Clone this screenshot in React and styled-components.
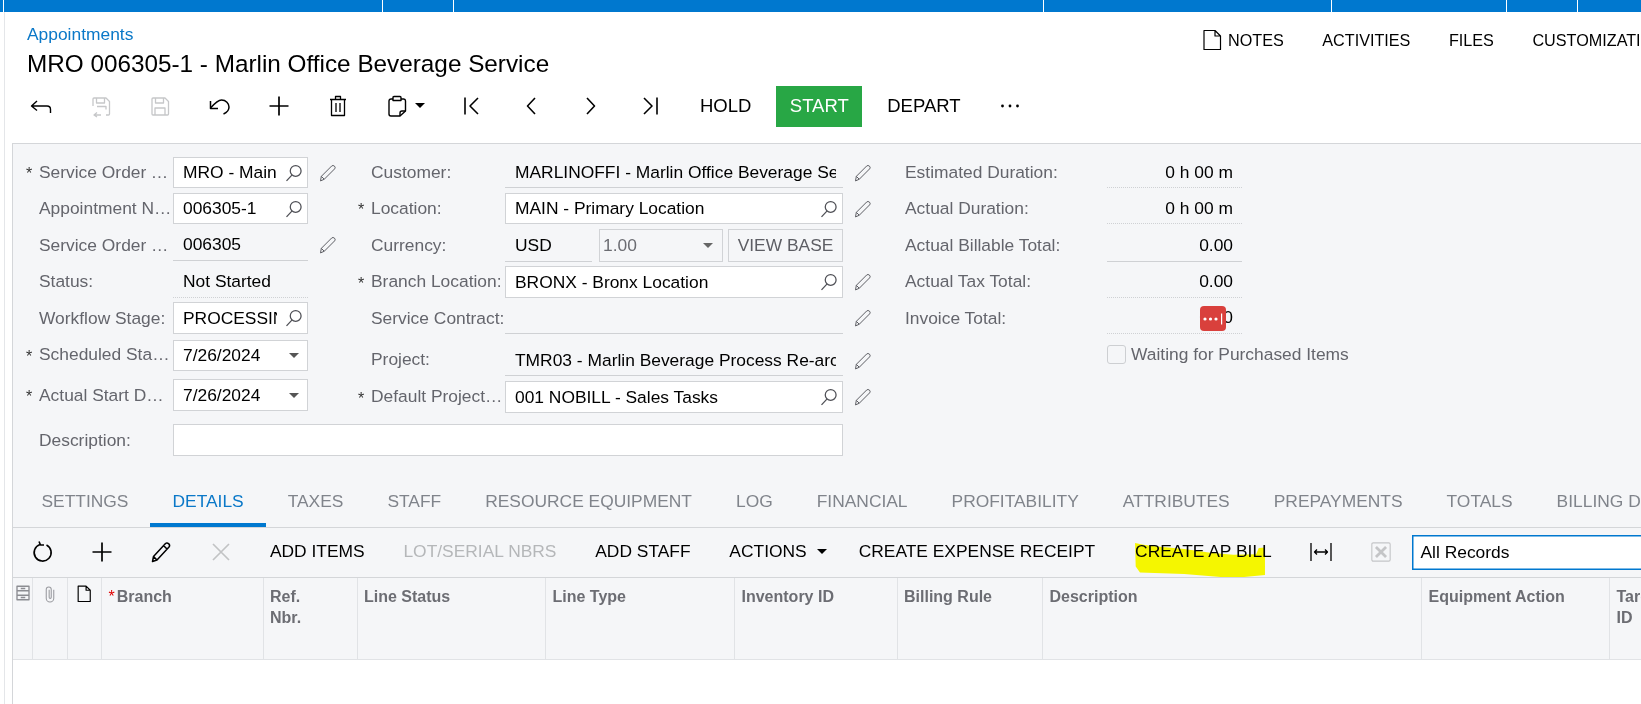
import React from "react";
import styled, { createGlobalStyle } from "styled-components";

const GlobalStyle = createGlobalStyle`
  html, body {
    margin: 0;
    padding: 0;
    width: 1641px;
    height: 704px;
    overflow: hidden;
    background: #fff;
    font-family: "Liberation Sans", Arial, sans-serif;
    font-size: 17.4px;
    color: #000;
  }
  * { box-sizing: border-box; }
`;

const Page = styled.div`
  width: 1641px;
  height: 704px;
  overflow: hidden;
  display: flex;
  flex-direction: column;
`;

const TopBar = styled.div`
  display: flex;
  height: 12px;
  flex: none;
  background: #0078cf;
`;

const TopSeg = styled.div`
  width: ${(p) => p.$w}px;
  height: 100%;
  border-right: 1px solid #fff;
  flex: none;
`;

const Main = styled.div`
  flex: 1;
  min-height: 0;
  margin-left: 4px;
  border-left: 1px solid #e4e6e9;
  display: flex;
  flex-direction: column;
`;

const Header = styled.div`
  display: flex;
  justify-content: space-between;
  height: 74px;
  flex: none;
  padding-left: 22px;
`;

const Crumb = styled.div`
  color: #0a78c8;
  font-size: 17.4px;
  line-height: 20px;
  margin-top: 12px;
`;

const Title = styled.h1`
  margin: 5px 0 0;
  font-size: 24.3px;
  font-weight: 400;
  line-height: 30px;
  white-space: nowrap;
`;

const TopLinks = styled.div`
  display: flex;
  flex: none;
  width: 441px;
  height: 38px;
  margin-top: 9px;
  align-items: center;
  overflow: hidden;
`;

const TopLink = styled.span`
  flex: none;
  font-size: 16.2px;
  margin-right: 38.5px;
  white-space: nowrap;
`;

const NoteIcon = styled.span`
  display: flex;
  flex: none;
  margin-right: 4px;
`;

const Toolbar = styled.div`
  display: flex;
  align-items: center;
  height: 41px;
  flex: none;
  padding-left: 6.5px;
`;

const IconBtn = styled.span`
  display: flex;
  flex: none;
  align-items: center;
  justify-content: center;
  width: ${(p) => p.$w || 59.4}px;
  height: 100%;
  padding-bottom: 2px;
  gap: ${(p) => p.$gap || 0}px;
`;

const TextBtn = styled.span`
  position: relative;
  display: flex;
  flex: none;
  align-items: center;
  height: 100%;
  padding: 0 ${(p) => p.$pr || p.$px || 20}px 2px ${(p) => p.$px || 20}px;
  font-size: ${(p) => p.$fs || 17.4}px;
  white-space: nowrap;
`;

const DisabledText = styled.span`
  color: #b5b7b9;
`;

const StartBtn = styled.span`
  display: flex;
  flex: none;
  align-items: center;
  height: 100%;
  margin: 0 5px;
  padding: 0 13.5px 2px;
  background: #28a745;
  color: #fff;
  font-size: 18.5px;
`;

const Caret = styled.i`
  display: block;
  flex: none;
  width: 0;
  height: 0;
  margin-left: ${(p) => p.$ml || 0}px;
  border-left: 5px solid transparent;
  border-right: 5px solid transparent;
  border-top: 5px solid ${(p) => p.$color || "#000"};
`;

const Panel = styled.div`
  flex: 1;
  min-height: 0;
  margin: 16px 0 0 7px;
  border-top: 1px solid #d4d6d9;
  border-left: 1px solid #d4d6d9;
  background: #f5f6f8;
  display: flex;
  flex-direction: column;
`;

const Form = styled.div`
  display: flex;
  flex: none;
  padding: 13px 0 0 13px;
`;

const LeftBlock = styled.div`
  display: flex;
  flex-direction: column;
  width: 857px;
  flex: none;
`;

const Columns = styled.div`
  display: flex;
`;

const Column = styled.div`
  display: flex;
  flex-direction: column;
  flex: none;
  width: ${(p) => p.$w}px;
  margin-left: ${(p) => p.$ml || 0}px;
`;

const Row = styled.div`
  display: flex;
  align-items: center;
  height: ${(p) => p.$h || 31}px;
  margin-top: ${(p) => (p.$mt === undefined ? 5 : p.$mt)}px;
`;

const Star = styled.span`
  flex: none;
  width: 13px;
  height: 13px;
  font-size: 16px;
  color: #333;
  line-height: 1;
`;

const Label = styled.span`
  flex: none;
  width: ${(p) => p.$w || 134}px;
  margin-bottom: ${(p) => (p.$up ? 2 : 0)}px;
  padding-right: 1px;
  color: #64656c;
  white-space: nowrap;
  overflow: ${(p) => (p.$open ? "visible" : "hidden")};
  text-overflow: ${(p) => (p.$open ? "clip" : "ellipsis")};
`;

const Field = styled.div`
  position: relative;
  display: flex;
  align-items: center;
  flex: none;
  width: ${(p) => p.$w}px;
  height: 100%;
  padding: 0 ${(p) => p.$pr ?? 7}px 0 ${(p) => (p.$box ? 9 : 10)}px;
  background: ${(p) => (p.$box ? "#fff" : "transparent")};
  border: ${(p) => (p.$box ? "1px solid #d1d3d6" : "none")};
  border-bottom: ${(p) =>
    p.$box ? "1px solid #d1d3d6" : p.$line ? "1px solid #cfd1d4" : p.$dot ? "1px dotted #cfd1d4" : "none"};
`;

const Value = styled.span`
  flex: 1;
  min-width: 0;
  overflow: hidden;
  white-space: nowrap;
  text-align: ${(p) => (p.$right ? "right" : "left")};
`;

const FieldIcon = styled.span`
  display: flex;
  flex: none;
  align-items: center;
  justify-content: center;
  width: 20px;
  margin-left: 7px;
`;

const Side = styled.span`
  display: flex;
  flex: none;
  width: 40px;
  justify-content: center;
`;

const Group = styled.div`
  display: flex;
  flex: none;
  width: 338px;
  height: 100%;
  gap: 5px;
`;

const RateSelect = styled.div`
  display: flex;
  align-items: center;
  justify-content: space-between;
  flex: none;
  width: 124px;
  height: 100%;
  margin-left: 2px;
  padding: 0 9px 0 3px;
  border: 1px solid #d1d3d6;
  color: #6b6c72;
`;

const ViewBase = styled.div`
  display: flex;
  align-items: center;
  justify-content: center;
  flex: 1;
  height: 100%;
  border: 1px solid #d1d3d6;
  color: #5d5e64;
`;

const RedBadge = styled.span`
  position: absolute;
  right: 16px;
  top: 4px;
  display: flex;
  align-items: center;
  justify-content: center;
  width: 26px;
  height: 25px;
  border-radius: 4px;
  background: #d9403c;
`;

const CheckRow = styled.div`
  display: flex;
  align-items: center;
  height: 19px;
  margin: 11px 0 0 202px;
  color: #64656c;
  white-space: nowrap;
`;

const CheckBox = styled.span`
  flex: none;
  width: 19px;
  height: 19px;
  margin-right: 5px;
  border: 1px solid #cdcfd2;
  border-radius: 3px;
  background: #f5f6f8;
`;

const TabBar = styled.div`
  display: flex;
  flex: none;
  height: 52px;
  margin-top: 20px;
  padding-left: 6.5px;
  border-bottom: 1px solid #d4d6d9;
  overflow: hidden;
`;

const Tab = styled.div`
  flex: none;
  height: 51px;
  padding: 0 22px;
  line-height: 50px;
  white-space: nowrap;
  color: ${(p) => (p.$active ? "#0a78c8" : "#80848b")};
  border-bottom: 4px solid ${(p) => (p.$active ? "#0078cf" : "transparent")};
`;

const GridBar = styled.div`
  display: flex;
  flex: none;
  align-items: center;
  height: 49px;
  overflow: hidden;
`;

const Highlight = styled.svg`
  position: absolute;
  left: 19px;
  top: 15px;
  mix-blend-mode: multiply;
`;

const Search = styled.div`
  flex: none;
  display: flex;
  align-items: center;
  width: 260px;
  height: 35px;
  margin-left: 1px;
  padding-left: 8px;
  background: #fff;
  border: 1px solid #0078cf;
  box-shadow: inset 0 0 0 0.5px #0078cf;
`;

const GridHead = styled.div`
  display: flex;
  flex: none;
  height: 83px;
  border-top: 1px solid #d4d6d9;
  border-bottom: 1px solid #e1e3e6;
`;

const HeadCell = styled.div`
  flex: none;
  width: ${(p) => p.$w}px;
  padding: 8px 6px 0 6.5px;
  border-right: 1px solid #e1e3e6;
  font-size: 16px;
  font-weight: 700;
  line-height: 21px;
  color: #6c6d73;
  white-space: nowrap;
  &:last-child { border-right: none; }
`;

const IconCell = styled.div`
  display: flex;
  flex: none;
  justify-content: center;
  width: ${(p) => p.$w}px;
  padding-top: 6px;
  border-right: 1px solid #e1e3e6;
`;

const ReqMark = styled.span`
  color: #e00000;
  font-weight: 400;
  margin-right: 2px;
`;

const GridBody = styled.div`
  flex: 1;
  background: #fff;
`;

const Svg = ({ size = 24, color = "#000", sw = 1.6, children }) => (
  <svg
    width={size}
    height={size}
    viewBox="0 0 24 24"
    fill="none"
    stroke={color}
    strokeWidth={sw}
    strokeLinejoin="round"
  >
    {children}
  </svg>
);

const BackIcon = () => (
  <Svg sw={1.4}>
    <path d="M8 7L2.5 12L8 16.5M2.5 12H18Q21.5 12 21.5 15.5V19" />
  </Svg>
);
const SaveBackIcon = () => (
  <Svg color="#c6c7c9" sw={1.3}>
    <path d="M4 12V5a1 1 0 0 1 1-1h12l3.5 3.5V20a1 1 0 0 1-1 1H17M7.5 4v5h8V4M8 12.5h9v3" />
    <path d="M12 21H5M8 18.5L5 21L8 23" />
  </Svg>
);
const SaveIcon = () => (
  <Svg color="#c6c7c9" sw={1.3}>
    <path d="M4 5a1 1 0 0 1 1-1h12l3.5 3.5V20a1 1 0 0 1-1 1H5a1 1 0 0 1-1-1zM7.5 4v5h8V4M7 21v-7h10v7" />
  </Svg>
);
const UndoIcon = () => (
  <Svg sw={1.5}>
    <path d="M3.5 14C8 9 11 6 14.5 6C19 6 22 9.5 22 13C22 16 20 18.5 16.5 20" />
    <path d="M3.5 7V14.5H11" />
  </Svg>
);
const PlusIcon = () => (
  <Svg sw={1.7}>
    <path d="M12 2.5V21.5M2.5 12H21.5" />
  </Svg>
);
const TrashIcon = () => (
  <Svg sw={1.3}>
    <path d="M4 5.5H20M9.5 5.5V2.5H14.5V5.5M5.5 5.5V21.5H18.5V5.5M10 9V18M14 9V18" />
  </Svg>
);
const ClipIcon = () => (
  <Svg sw={1.4}>
    <path d="M8 5H6.5A2 2 0 0 0 4 7V20A2 2 0 0 0 6 22H15L20.5 17V7A2 2 0 0 0 18 5H16" />
    <path d="M8 6.5V3.5Q8 2.5 9 2.5H15Q16 2.5 16 3.5V6.5ZM15 22V19Q15 17 17 17H20.5" />
  </Svg>
);
const FirstIcon = () => (
  <Svg sw={1.6}>
    <path d="M5 3.5V20.5M18 4L10 12L18 20" />
  </Svg>
);
const PrevIcon = () => (
  <Svg sw={1.6}>
    <path d="M16 4L8.5 12L16 20" />
  </Svg>
);
const NextIcon = () => (
  <Svg sw={1.6}>
    <path d="M8 4L15.5 12L8 20" />
  </Svg>
);
const LastIcon = () => (
  <Svg sw={1.6}>
    <path d="M6 4L14 12L6 20M19 3.5V20.5" />
  </Svg>
);
const DotsIcon = () => (
  <Svg>
    <g fill="#000" stroke="none">
      <circle cx="4.5" cy="12" r="1.4" />
      <circle cx="12" cy="12" r="1.4" />
      <circle cx="19.5" cy="12" r="1.4" />
    </g>
  </Svg>
);
const DocIcon = () => (
  <Svg sw={1.2}>
    <path d="M4 2.5H15L20.5 8V21.5H4ZM15 2.5V8H20.5" />
  </Svg>
);
const SearchIcon = () => (
  <Svg size={20} color="#4e4f55" sw={1.5}>
    <circle cx="14" cy="9.5" r="6.5" />
    <path d="M9.5 14.5L3 21.5" />
  </Svg>
);
const PencilIcon = ({ color = "#5d5e64" }) => (
  <Svg size={20} color={color} sw={1.2}>
    <path d="M3 21.5L4 16L16.5 3.5Q18 2.3 19.8 3.8Q21.3 5.5 20 7L7.5 19.5ZM4 16L7.5 19.5" />
  </Svg>
);
const RefreshIcon = () => (
  <Svg sw={1.6}>
    <path d="M9 4.5A8.5 8.5 0 1 0 15.5 5" />
    <path d="M8 1.5L9.5 5L13 5" />
  </Svg>
);
const EditIcon = () => (
  <Svg sw={1.5}>
    <path d="M3.5 21.5L4.5 16.5L16.5 3.5Q18 2.3 19.8 3.8Q21.3 5.5 20 7L8 20ZM4.5 16.5L8 20M14.5 5.5L18 9" />
  </Svg>
);
const CloseIcon = () => (
  <Svg color="#c2c3c5" sw={1.7}>
    <path d="M4 4L20 20M20 4L4 20" />
  </Svg>
);
const FitIcon = () => (
  <Svg size={24} sw={1.3}>
    <path d="M2 3V21M22 3V21M5.5 12H18.5M8 9.5L5.5 12L8 14.5M16 9.5L18.5 12L16 14.5" />
  </Svg>
);
const ExcelIcon = () => (
  <Svg size={22} color="#c4c5c7" sw={1.2}>
    <rect x="2" y="2" width="20" height="20" rx="1.5" />
    <path d="M6.5 6.5L17.5 17.5M17.5 6.5L6.5 17.5" strokeWidth="3" />
  </Svg>
);
const ColumnsIcon = () => (
  <Svg size={18} color="#8c8d92" sw={1.8}>
    <path d="M4 3H20V21H4ZM4 9H20M4 15H20M9 6H15M9 18H15" />
  </Svg>
);
const PaperclipIcon = () => (
  <Svg size={20} color="#9b9ca1" sw={1.3}>
    <path d="M16.5 7V17A4.5 4.5 0 0 1 7.5 17V6.5A3 3 0 0 1 13.5 6.5V16A1 1 0 0 1 11 16V7" />
  </Svg>
);
const HeadDocIcon = () => (
  <Svg size={20} sw={1.4}>
    <path d="M5 2.5H14.5L19.5 7.5V21H5ZM14.5 2.5V7.5H19.5" />
  </Svg>
);
const BadgeDots = () => (
  <svg width="24" height="14" viewBox="0 0 24 14">
    <g fill="#fff">
      <circle cx="4" cy="7" r="1.6" />
      <circle cx="9.5" cy="7" r="1.6" />
      <circle cx="15" cy="7" r="1.6" />
      <rect x="20" y="1.5" width="1.2" height="11" />
    </g>
  </svg>
);

const topSegs = [4, 379, 71, 590, 288, 175, 71];
const tabs = [
  "SETTINGS", "DETAILS", "TAXES", "STAFF", "RESOURCE EQUIPMENT", "LOG", "FINANCIAL",
  "PROFITABILITY", "ATTRIBUTES", "PREPAYMENTS", "TOTALS", "BILLING DETAILS",
];
const headCols = [
  { w: 161.5, text: <><ReqMark>*</ReqMark>Branch</> },
  { w: 94, text: <>Ref.<br />Nbr.</> },
  { w: 188.5, text: "Line Status" },
  { w: 189, text: "Line Type" },
  { w: 162.5, text: "Inventory ID" },
  { w: 145.5, text: "Billing Rule" },
  { w: 379, text: "Description" },
  { w: 188, text: "Equipment Action" },
  { w: 60, text: <>Target<br />ID</> },
];

const LookupField = ({ w, value }) => (
  <Field $box $w={w} $pr={3}>
    <Value>{value}</Value>
    <FieldIcon><SearchIcon /></FieldIcon>
  </Field>
);

const DateField = ({ value }) => (
  <Field $box $w={135} $pr={3}>
    <Value>{value}</Value>
    <FieldIcon><Caret $color="#555" /></FieldIcon>
  </Field>
);

const App = () => (
  <Page>
    <GlobalStyle />
    <TopBar>
      {topSegs.map((w, i) => <TopSeg key={i} $w={w} />)}
    </TopBar>
    <Main>
      <Header>
        <div>
          <Crumb>Appointments</Crumb>
          <Title>MRO 006305-1 - Marlin Office Beverage Service</Title>
        </div>
        <TopLinks>
          <NoteIcon><DocIcon /></NoteIcon>
          <TopLink>NOTES</TopLink>
          <TopLink>ACTIVITIES</TopLink>
          <TopLink>FILES</TopLink>
          <TopLink>CUSTOMIZATION</TopLink>
        </TopLinks>
      </Header>
      <Toolbar>
        <IconBtn><BackIcon /></IconBtn>
        <IconBtn><SaveBackIcon /></IconBtn>
        <IconBtn><SaveIcon /></IconBtn>
        <IconBtn><UndoIcon /></IconBtn>
        <IconBtn><PlusIcon /></IconBtn>
        <IconBtn><TrashIcon /></IconBtn>
        <IconBtn $w={74.5} $gap={6}><ClipIcon /><Caret /></IconBtn>
        <IconBtn><FirstIcon /></IconBtn>
        <IconBtn><PrevIcon /></IconBtn>
        <IconBtn><NextIcon /></IconBtn>
        <IconBtn><LastIcon /></IconBtn>
        <TextBtn $fs={18.5}>HOLD</TextBtn>
        <StartBtn>START</StartBtn>
        <TextBtn $fs={18.5}>DEPART</TextBtn>
        <IconBtn $w={58}><DotsIcon /></IconBtn>
      </Toolbar>
      <Panel>
        <Form>
          <LeftBlock>
            <Columns>
              <Column $w={322}>
                <Row $mt={0}>
                  <Star>*</Star><Label>Service Order Type:</Label>
                  <LookupField w={135} value="MRO - Main Office" />
                  <Side><PencilIcon /></Side>
                </Row>
                <Row>
                  <Star /><Label>Appointment Nbr.:</Label>
                  <LookupField w={135} value="006305-1" />
                </Row>
                <Row $h={32}>
                  <Star /><Label>Service Order Nbr.:</Label>
                  <Field $line $w={135}><Value>006305</Value></Field>
                  <Side><PencilIcon /></Side>
                </Row>
                <Row $h={32}>
                  <Star /><Label $up>Status:</Label>
                  <Field $dot $w={135}><Value>Not Started</Value></Field>
                </Row>
                <Row $h={32} $mt={4}>
                  <Star /><Label>Workflow Stage:</Label>
                  <LookupField w={135} value="PROCESSING" />
                </Row>
                <Row $mt={6}>
                  <Star>*</Star><Label $up>Scheduled Start Date:</Label>
                  <DateField value="7/26/2024" />
                </Row>
                <Row $h={32} $mt={8}>
                  <Star>*</Star><Label>Actual Start Date:</Label>
                  <DateField value="7/26/2024" />
                </Row>
              </Column>
              <Column $w={525} $ml={10}>
                <Row $mt={0}>
                  <Star /><Label>Customer:</Label>
                  <Field $line $w={338}><Value>MARLINOFFI - Marlin Office Beverage Service</Value></Field>
                  <Side><PencilIcon /></Side>
                </Row>
                <Row>
                  <Star>*</Star><Label>Location:</Label>
                  <LookupField w={338} value="MAIN - Primary Location" />
                  <Side><PencilIcon /></Side>
                </Row>
                <Row $h={33}>
                  <Star /><Label>Currency:</Label>
                  <Group>
                    <Field $line $w={87}><Value>USD</Value></Field>
                    <RateSelect>1.00<Caret $color="#666" /></RateSelect>
                    <ViewBase>VIEW BASE</ViewBase>
                  </Group>
                </Row>
                <Row $h={32} $mt={4}>
                  <Star>*</Star><Label $up>Branch Location:</Label>
                  <LookupField w={338} value="BRONX - Bronx Location" />
                  <Side><PencilIcon /></Side>
                </Row>
                <Row $h={32} $mt={4}>
                  <Star /><Label $open>Service Contract:</Label>
                  <Field $line $w={338} />
                  <Side><PencilIcon /></Side>
                </Row>
                <Row $mt={11}>
                  <Star /><Label $up>Project:</Label>
                  <Field $line $w={338}><Value>TMR03 - Marlin Beverage Process Re-architecture</Value></Field>
                  <Side><PencilIcon /></Side>
                </Row>
                <Row $h={32}>
                  <Star>*</Star><Label $up>Default Project Task:</Label>
                  <LookupField w={338} value="001 NOBILL - Sales Tasks" />
                  <Side><PencilIcon /></Side>
                </Row>
              </Column>
            </Columns>
            <Row $h={32} $mt={11}>
              <Star /><Label>Description:</Label>
              <Field $box $w={670} />
            </Row>
          </LeftBlock>
          <Column $w={360} $ml={22}>
            <Row $mt={0}>
              <Label $w={202}>Estimated Duration:</Label>
              <Field $dot $w={135} $pr={9}><Value $right>0 h 00 m</Value></Field>
            </Row>
            <Row>
              <Label $w={202}>Actual Duration:</Label>
              <Field $dot $w={135} $pr={9}><Value $right>0 h 00 m</Value></Field>
            </Row>
            <Row $h={33}>
              <Label $w={202}>Actual Billable Total:</Label>
              <Field $line $w={135} $pr={9}><Value $right>0.00</Value></Field>
            </Row>
            <Row $h={32} $mt={4}>
              <Label $w={202} $up>Actual Tax Total:</Label>
              <Field $dot $w={135} $pr={9}><Value $right>0.00</Value></Field>
            </Row>
            <Row $h={32} $mt={4}>
              <Label $w={202}>Invoice Total:</Label>
              <Field $dot $w={135} $pr={9}>
                <Value $right>0.00</Value>
                <RedBadge><BadgeDots /></RedBadge>
              </Field>
            </Row>
            <CheckRow><CheckBox />Waiting for Purchased Items</CheckRow>
          </Column>
        </Form>
        <TabBar>
          {tabs.map((t) => <Tab key={t} $active={t === "DETAILS"}>{t}</Tab>)}
        </TabBar>
        <GridBar>
          <IconBtn><RefreshIcon /></IconBtn>
          <IconBtn><PlusIcon /></IconBtn>
          <IconBtn><EditIcon /></IconBtn>
          <IconBtn><CloseIcon /></IconBtn>
          <TextBtn $px={19.4}>ADD ITEMS</TextBtn>
          <TextBtn $px={19.4}><DisabledText>LOT/SERIAL NBRS</DisabledText></TextBtn>
          <TextBtn $px={19.4}>ADD STAFF</TextBtn>
          <TextBtn $px={19.4} $pr={12}>ACTIONS<Caret $ml={10} /></TextBtn>
          <TextBtn>CREATE EXPENSE RECEIPT</TextBtn>
          <TextBtn>
            <Highlight width="133" height="36" viewBox="0 0 400 110">
              <path
                d="M0 0L30 6L60 10L150 18L230 30L300 36L370 34L378 15L397 14L397 98L300 107L150 95L15 90L2 72Z"
                fill="#ffff00"
              />
            </Highlight>
            CREATE AP BILL
          </TextBtn>
          <IconBtn><FitIcon /></IconBtn>
          <IconBtn><ExcelIcon /></IconBtn>
          <Search>All Records</Search>
        </GridBar>
        <GridHead>
          <IconCell $w={20}><ColumnsIcon /></IconCell>
          <IconCell $w={34.5}><PaperclipIcon /></IconCell>
          <IconCell $w={34.5}><HeadDocIcon /></IconCell>
          {headCols.map((c, i) => <HeadCell key={i} $w={c.w}>{c.text}</HeadCell>)}
        </GridHead>
        <GridBody />
      </Panel>
    </Main>
  </Page>
);

export default App;
